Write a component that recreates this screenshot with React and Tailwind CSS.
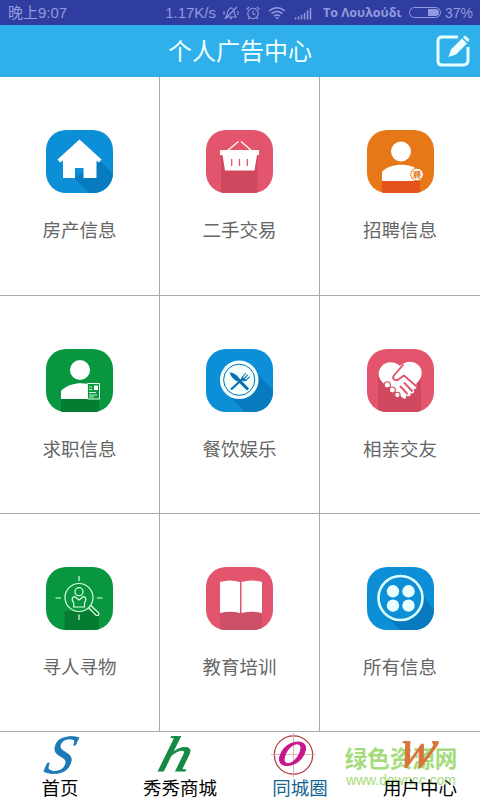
import React from "react";

const BLUE = "#0c8fd6";
const ROSE = "#e2556c";
const GREEN = "#08963f";

function Tile({ id, color, children }) {
  return (
    <svg className="h-[63px] w-[67px] shrink-0" viewBox="0 0 67 63">
      <clipPath id={id}>
        <rect width="67" height="63" rx="20" />
      </clipPath>
      <g clipPath={`url(#${id})`}>
        <rect width="67" height="63" fill={color} />
        {children}
      </g>
    </svg>
  );
}

const House = () => (
  <Tile id="house" color={BLUE}>
    <path d="M28 48L43 63H67V44L54 31Z" fill="#087bc0" />
    <path d="M33.5 9.5L55.5 29.5L53 32.5L50.5 30.5V48H37.5V38H29V48H17V30.5L14 32.5L11.5 29.5Z" fill="#fff" />
  </Tile>
);

const Basket = () => (
  <Tile id="basket" color={ROSE}>
    <path d="M15 26H51.5V63H15Z" fill="#d0485e" />
    <path d="M21 21L32.5 11.5M46 21L35 11.5" stroke="#fff" strokeWidth="1.3" fill="none" />
    <path d="M14 20H53V25H51L48.5 40.5H19L16.5 25H14Z" fill="#fff" />
    <path d="M25.7 29V36M33.5 29V36M41.3 29V36" stroke={ROSE} strokeWidth="1.3" />
  </Tile>
);

const Recruit = () => (
  <Tile id="recruit" color="#e67817">
    <circle cx="34" cy="21.5" r="10" fill="#fff" />
    <path d="M15 51V42C23 33 45 32 53 42V51Z" fill="#fff" />
    <path d="M15 51H53V63H15Z" fill="#e4531b" />
    <circle cx="50" cy="44.5" r="6.3" fill="#fff" stroke="#e67817" strokeWidth="1" />
    <text x="50" y="47.6" textAnchor="middle" fontSize="8" fontWeight="700" fill="#e67817" className="font-['Noto_Sans_CJK_SC',sans-serif]">聘</text>
  </Tile>
);

const Resume = () => (
  <Tile id="resume" color={GREEN}>
    <circle cx="34" cy="21" r="10" fill="#fff" />
    <path d="M15 50V42C23 33 39 33 45 36V50Z" fill="#fff" />
    <path d="M15 50H53V63H15Z" fill="#067c33" />
    <path d="M41.5 34.5H53.5V50H41.5Z" fill={GREEN} stroke="#e4ffed" strokeWidth="1" />
    <path d="M48 36.5H52V41H48Z" fill="#fff" />
    <path d="M43 38H46M43 40.5H46.5M43 43.5H50M43 46H51M43 48H48" stroke="#e4ffed" strokeWidth=".9" />
  </Tile>
);

const Dining = () => (
  <Tile id="dining" color={BLUE}>
    <path d="M22 46L39 63H67V41L47 20Z" fill="#087bc0" />
    <circle cx="33.2" cy="30.8" r="19.3" fill="#f4ffff" />
    <circle cx="33.2" cy="30.8" r="15.6" fill="none" stroke="#0870ad" strokeWidth="1" />
    <path d="M23.5 23.5Q29 23.5 33 29L43 39.5L41 41.5L32 32.5Q26 30.5 23.5 23.5Z" fill="#0870ad" />
    <path d="M25 40.5L37 29.5" stroke="#0870ad" strokeWidth="2.2" fill="none" />
    <path d="M36 27.5Q34.5 30 36.5 31.5Q38.5 33 40.5 31.5L36 27.5Z" fill="#0870ad" />
    <path d="M36 28.5L40 24M37.8 30L41.8 25.8M39.5 31.7L43.8 27.6" stroke="#0870ad" strokeWidth="1.1" fill="none" />
  </Tile>
);

const Handshake = () => (
  <Tile id="handshake" color={ROSE}>
    <path d="M11 29H54V63H11Z" fill="#d0485e" />
    <path d="M33 17C28 12 19 12 15 17C10 22 11 29 16 34L36 49C38 51 40 49 39 46C42 49 45 46 43 44C46 46 49 42 46 40C49 41 51 38 49 35C57 28 56 19 50 15C44 11 37 13 33 17Z" fill="#fff" />
    <path d="M36 16L26.5 27C25 30 29 33 32 30L37 26.5L49.5 37.5M37.5 34L45 42M33.5 37.5L40 44.5" stroke={ROSE} strokeWidth="1.9" fill="none" strokeLinejoin="round" strokeLinecap="round" />
    <g fill="#fff" stroke="#d0485e" strokeWidth="1.1">
      <circle cx="20.3" cy="35.8" r="3.1" />
      <circle cx="25.4" cy="41" r="3" />
      <circle cx="30.4" cy="46" r="2.7" />
    </g>
  </Tile>
);

const Search = () => (
  <Tile id="search" color={GREEN}>
    <path d="M18.5 44H53V63H18.5Z" fill="#067c33" />
    <g fill="none" stroke="#e2ffe9" strokeWidth="1.2">
      <circle cx="33" cy="30.5" r="14" />
      <circle cx="33" cy="24.7" r="4" />
      <path d="M28.5 29.5L33 33L37.5 29.5Q40 30 39.8 33L38.5 36V40H27.7V36L26.2 33Q26 30 28.5 29.5Z" />
      <path d="M33 9V14M33 47.5V53M9.5 31H15M51 31H56.5" />
      <path d="M42.5 40.8L50 48.2Q53 49.5 52.8 46L44.8 38.5" />
    </g>
  </Tile>
);

const Book = () => (
  <Tile id="book" color={ROSE}>
    <path d="M14 44H56V63H14Z" fill="#ce5067" />
    <path d="M14 15Q24 12 34 15V46Q24 43.5 14 46ZM35.5 15Q46 12 56 15V46Q46 43.5 35.5 46Z" fill="#fff" />
  </Tile>
);

const Button = () => (
  <Tile id="button" color={BLUE}>
    <path d="M17 47L33 63H67V43L50 21Z" fill="#087bc0" />
    <circle cx="33.5" cy="31" r="22" fill={BLUE} stroke="#dcffff" strokeWidth="2.6" />
    <g fill="#eaffff">
      <circle cx="26" cy="24.3" r="6.2" />
      <circle cx="41.5" cy="24.3" r="6.2" />
      <circle cx="26" cy="38.6" r="6.2" />
      <circle cx="41.5" cy="38.6" r="6.2" />
    </g>
  </Tile>
);

const rows = [
  [["房产信息", House], ["二手交易", Basket], ["招聘信息", Recruit]],
  [["求职信息", Resume], ["餐饮娱乐", Dining], ["相亲交友", Handshake]],
  [["寻人寻物", Search], ["教育培训", Book], ["所有信息", Button]],
];

function StatusBar() {
  return (
    <div className="flex h-[25px] items-center bg-[#303da0] pl-2 pr-[7px] text-[#929bdd]">
      <span className="text-[15px] leading-[26px]">晚上9:07</span>
      <span className="ml-auto text-[15px] leading-[26px]">1.17K/s</span>
      <svg className="ml-[7px] h-4 w-4" viewBox="0 0 16 16" fill="none" stroke="currentColor" strokeWidth="1.1">
        <path d="M3 12C5 10 4 4 7 3.5Q8 2 9 3.5C12 4 11 10 13 12ZM7 13.5H9M2 14L14 2M1 6V10M15 6V10" />
      </svg>
      <svg className="ml-[6px] h-4 w-4" viewBox="0 0 16 16" fill="none" stroke="currentColor" strokeWidth="1.1">
        <circle cx="8" cy="8.5" r="5.2" />
        <path d="M8 5.5V9L10.5 9.5M1.5 4.5L4 2M14.5 4.5L12 2M4.5 12.5L3 14M11.5 12.5L13 14" />
      </svg>
      <svg className="ml-[7px] h-4 w-[18px]" viewBox="0 0 18 16" fill="none" stroke="currentColor" strokeWidth="1.6">
        <path d="M1 6Q9 -.5 17 6M3.5 8.7Q9 4 14.5 8.7M6 11.2Q9 8.6 12 11.2" />
        <path d="M7 12.2H11L9 14.5Z" fill="currentColor" stroke="none" />
      </svg>
      <svg className="ml-[8px] h-4 w-[18px]" viewBox="0 0 18 16" fill="none" stroke="currentColor" strokeWidth="1.5">
        <path d="M1.5 14V16M4.5 13V16M7.5 11.5V16M10.5 9.5V16M13.5 7V16M16.5 4.5V16" transform="translate(0 -1.5)" />
      </svg>
      <span className="ml-[11px] w-[77px] whitespace-nowrap font-['Open_Sans','Noto_Sans',sans-serif] text-[12.5px] font-bold leading-[25px]">Το Λουλούδι</span>
      <span className="ml-[9px] flex h-[11px] w-[32px] justify-end rounded-full border border-current p-px">
        <span className="w-[11px] rounded-r-full bg-current" />
      </span>
      <span className="ml-[4px] w-[28px] whitespace-nowrap text-[14px] leading-[26px]">37%</span>
    </div>
  );
}

function Tab({ label, color, children }) {
  return (
    <div className={`flex w-[120px] flex-col items-center ${color}`}>
      <svg className="h-[44px] w-[60px] overflow-visible" viewBox="0 0 60 44">{children}</svg>
      <span className="mt-px text-[18.5px] leading-[23px]">{label}</span>
    </div>
  );
}

export default function App() {
  return (
    <div className="relative flex h-[800px] w-[480px] flex-col overflow-hidden bg-white font-['Liberation_Sans','Noto_Sans_CJK_SC',sans-serif]">
      <StatusBar />
      <header className="grid h-[52px] grid-cols-[1fr_auto_1fr] items-center bg-[#30b0eb]">
        <h1 className="col-start-2 pt-[2px] text-[24px] leading-[50px] text-[#efffff]">个人广告中心</h1>
        <svg className="mr-[9px] h-[36px] w-[36px] justify-self-end" viewBox="0 0 36 36">
          <path d="M23 4H7Q3 4 3 8V28Q3 32 7 32H28Q33 32 33 27V14" fill="none" stroke="#e4ffff" strokeWidth="3" />
          <path d="M13.5 24L16 16.5L27 5.5L32 10.5L21 21.5Z" fill="#efffff" />
          <path d="M28 4.5L30 2.5L34.5 6.5L33 9Z" fill="#efffff" />
        </svg>
      </header>
      <main>
        {rows.map((row, i) => (
          <div key={i} className={`grid grid-cols-3 border-b border-[#aaaaaa] ${i === 0 ? "h-[219px]" : "h-[218px]"}`}>
            {row.map(([label, Icon], j) => (
              <div key={label} className={`flex flex-col items-center pt-[53px] ${j < 2 ? "border-r border-[#aaaaaa]" : ""}`}>
                <Icon />
                <span className="mt-[24px] text-[18.5px] leading-[28px] text-[#666]">{label}</span>
              </div>
            ))}
          </div>
        ))}
      </main>
      <div className="pointer-events-none absolute left-[344px] top-[747px] flex w-[114px] flex-col items-center text-[#a5dc7b]">
        <span className="whitespace-nowrap text-[22.5px] font-bold leading-[26px]">绿色资源网</span>
        <span className="mt-px whitespace-nowrap text-[13.8px] leading-[14px]">www.downcc.com</span>
      </div>
      <nav className="relative flex h-[68px]">
        <Tab label="首页" color="text-black">
          <text transform="translate(26.5 41) skewX(-15)" textAnchor="middle" fontSize="55" fill="#1b7ab5" stroke="#1b7ab5" strokeWidth=".8" className="font-['Liberation_Serif',serif] italic">S</text>
        </Tab>
        <Tab label="秀秀商城" color="text-black">
          <text transform="translate(22 39) skewX(-15)" textAnchor="middle" fontSize="50" fill="#148a44" stroke="#148a44" strokeWidth=".8" className="font-['Liberation_Serif',serif] italic" textLength="32" lengthAdjust="spacingAndGlyphs">h</text>
        </Tab>
        <Tab label="同城圈" color="text-[#126592]">
          <circle cx="23.5" cy="23" r="19.2" fill="none" stroke="#b13a3d" strokeWidth="1.2" />
          <path d="M23.5 1V45M1 22.5H46" stroke="#d9a2a5" strokeWidth=".8" />
          <text transform="translate(19.5 33) skewX(-15)" textAnchor="middle" fontSize="49" fill="#c8178b" stroke="#c8178b" strokeWidth="1" className="font-['Liberation_Serif',serif] italic" textLength="27" lengthAdjust="spacingAndGlyphs">o</text>
        </Tab>
        <Tab label="用户中心" color="text-black">
          <text transform="translate(25 35) skewX(-12)" textAnchor="middle" fontSize="56" fill="#d9743a" stroke="#d9743a" strokeWidth=".8" className="font-['Liberation_Serif',serif] italic">w</text>
        </Tab>
      </nav>
    </div>
  );
}
